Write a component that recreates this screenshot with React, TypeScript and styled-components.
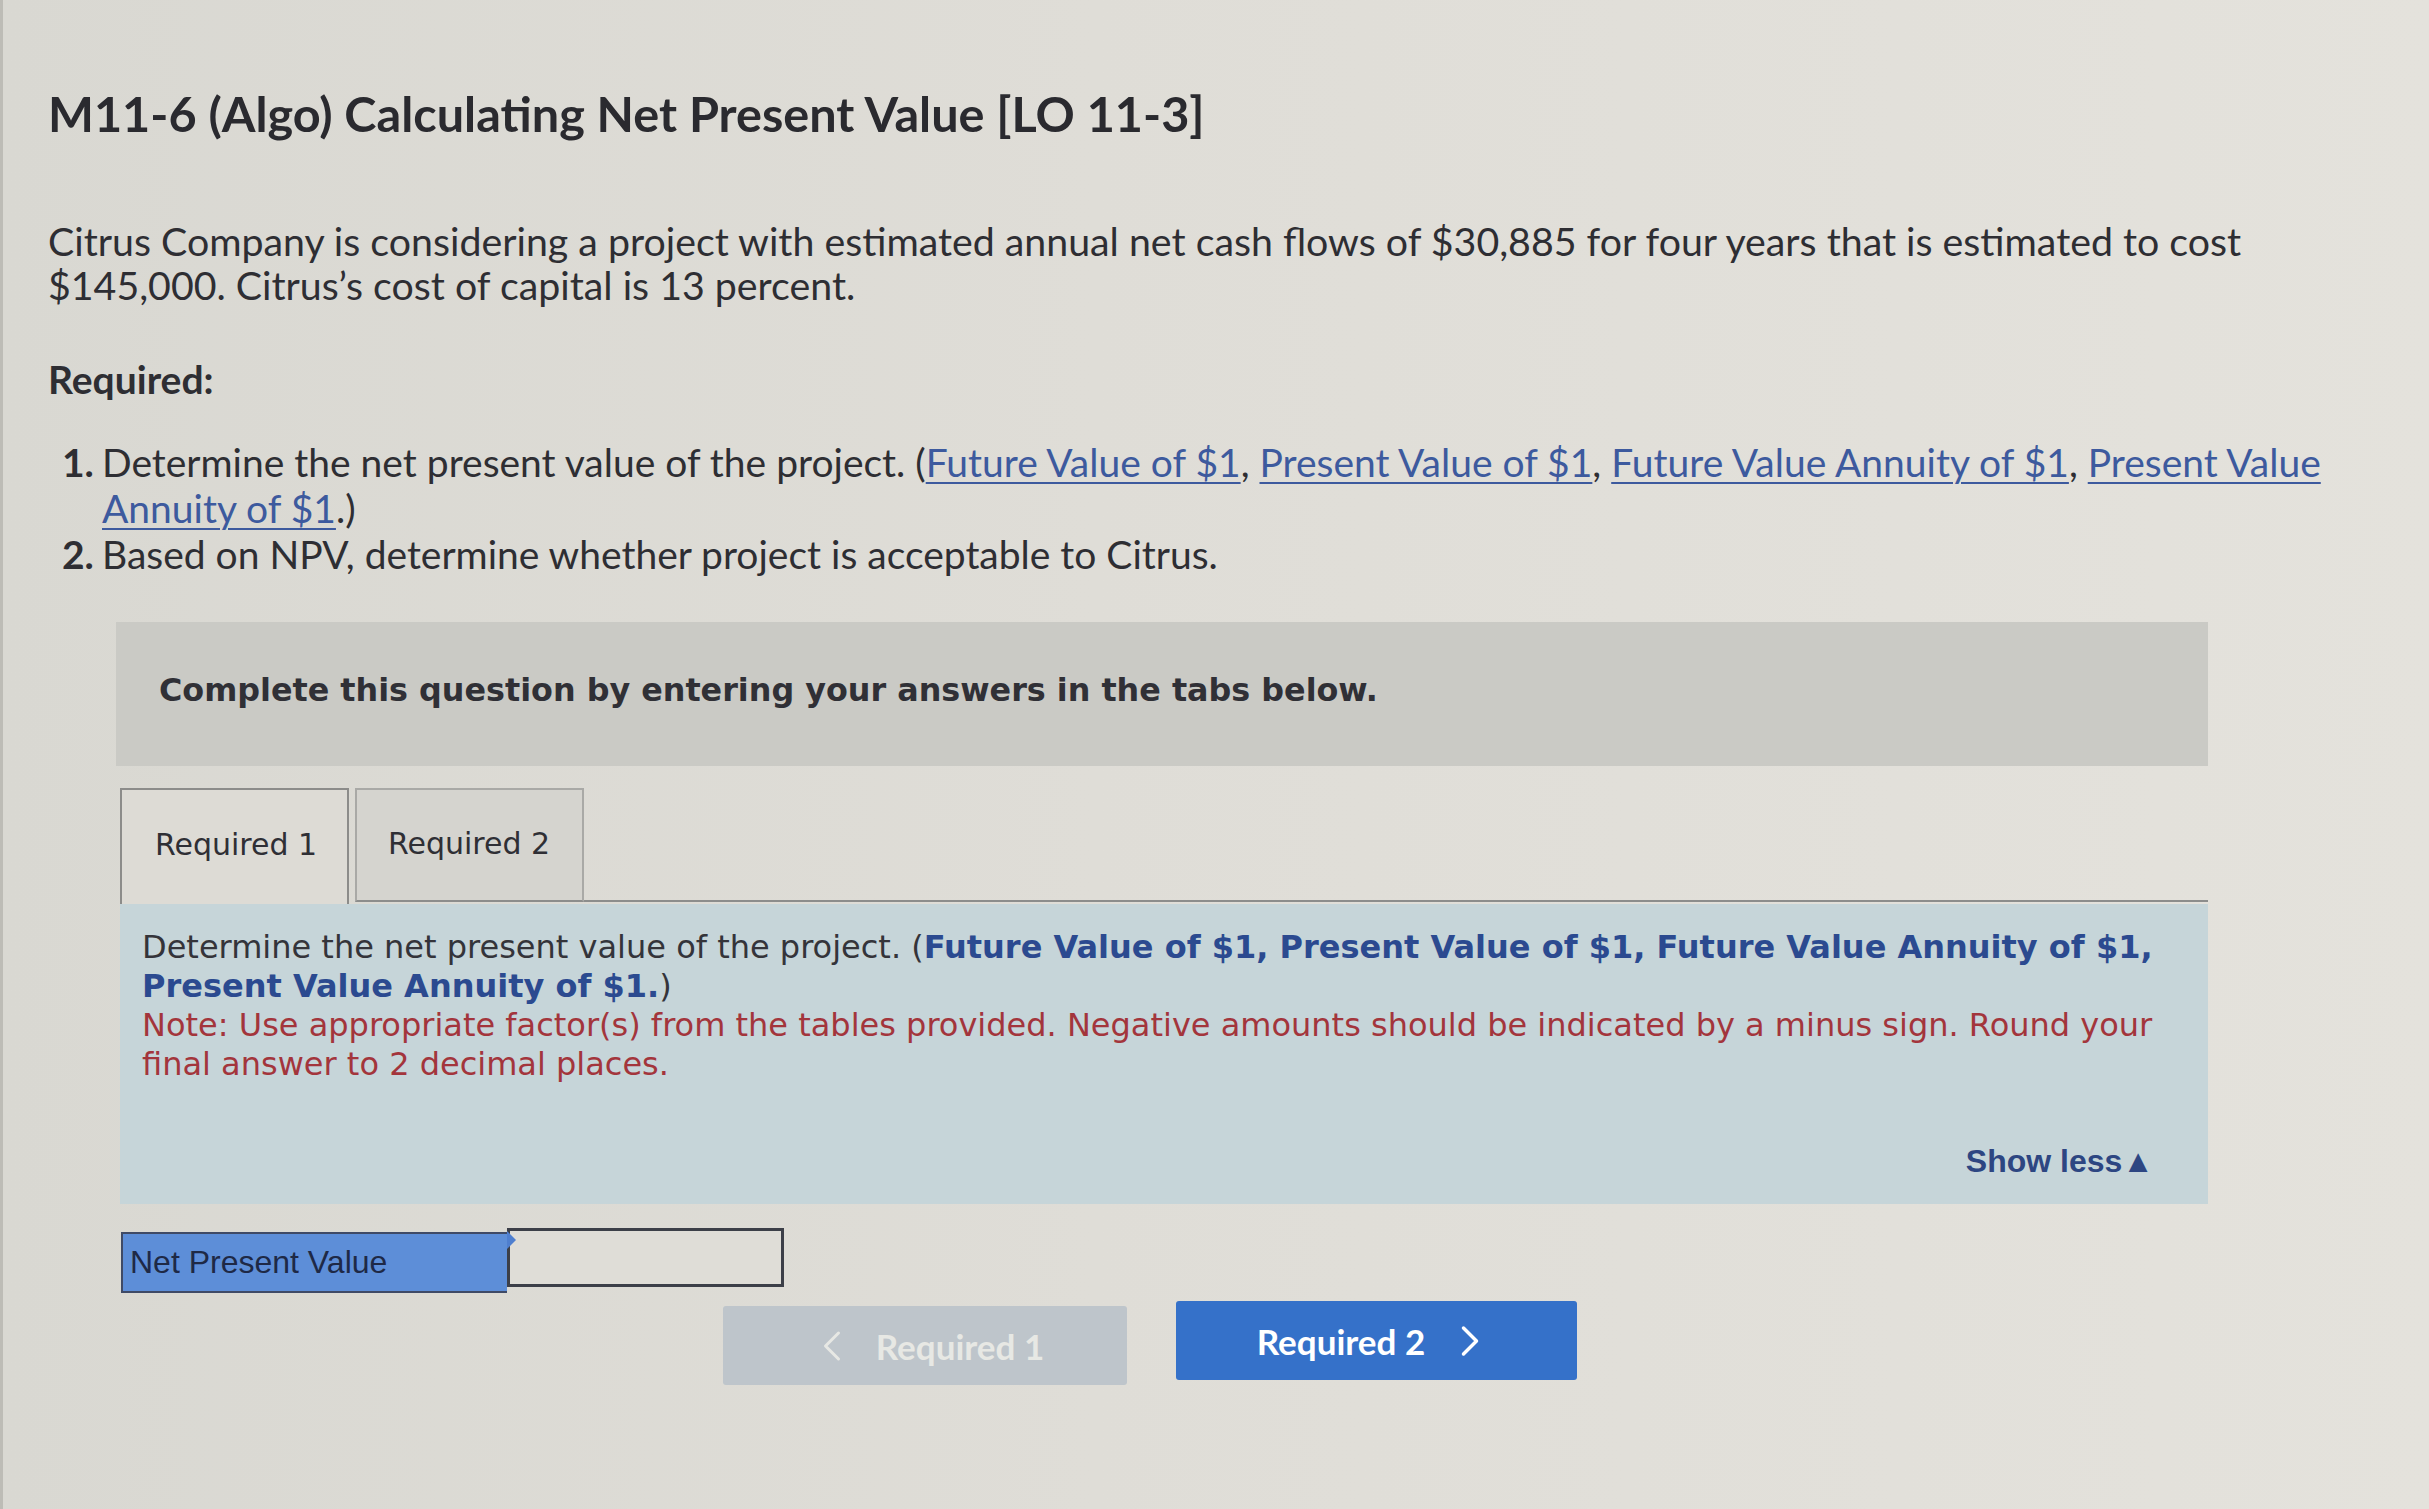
import React from "react";
import styled, { createGlobalStyle } from "styled-components";
import { ChevronLeft, ChevronRight } from "lucide-react";

const Global = createGlobalStyle`
  html, body { margin: 0; padding: 0; background: #dcdbd5; }
  body { font-family: Lato, "Open Sans", sans-serif; }
`;

const Page = styled.div`
  width: 2429px;
  min-height: 1509px;
  box-sizing: border-box;
  padding: 85px 0 0 45px;
  border-left: 3px solid #bdbcb6;
  background: linear-gradient(90deg, #d9d8d2 0%, #dfddd7 45%, #e4e2dc 100%);
  color: #2c2c31;
`;

const Title = styled.h1`
  margin: 0;
  font-size: 48.6px;
  line-height: 56px;
  font-weight: 700;
  color: #2a2a2f;
  white-space: nowrap;
`;

const Para = styled.p`
  margin: 78px 0 0;
  font-size: 39.3px;
  line-height: 44px;
  white-space: nowrap;
  color: #2e2e33;
`;

const Required = styled.h2`
  margin: 50px 0 0;
  font-size: 39px;
  line-height: 44px;
  font-weight: 700;
  color: #2e2e33;
`;

const List = styled.ol`
  margin: 38px 0 0;
  padding: 0;
  list-style: none;
`;

const Item = styled.li`
  display: flex;
  font-size: 39px;
  line-height: 46px;
  white-space: nowrap;
  color: #2e2e33;
`;

const Num = styled.span`
  width: 40px;
  margin-left: 14px;
  font-weight: 700;
  flex: none;
`;

const Link = styled.a`
  color: #3d5a9e;
  text-decoration: underline;
  text-decoration-thickness: 2px;
  text-underline-offset: 5px;
`;

const Section = styled.div`
  margin: 45px 0 0 68px;
  width: 2092px;
`;

const Banner = styled.div`
  background: #cacac5;
  padding: 50px 0 58px 43px;
  font-family: "DejaVu Sans", Verdana, sans-serif;
  font-weight: 700;
  font-size: 31.8px;
  line-height: 36px;
  color: #303036;
`;

const TabRow = styled.div`
  margin-top: 22px;
  display: flex;
  align-items: flex-end;
  gap: 6px;
  padding-left: 4px;
  &::after {
    content: "";
    flex: 1;
    align-self: flex-end;
    height: 2px;
    background: #8c8d8c;
    margin-bottom: 2px;
    margin-left: -6px;
  }
`;

const Tab = styled.div<{ $active?: boolean }>`
  box-sizing: border-box;
  width: 229px;
  height: ${(p) => (p.$active ? "116px" : "114px")};
  display: flex;
  align-items: center;
  padding-left: ${(p) => (p.$active ? "33px" : "31px")};
  padding-bottom: ${(p) => (p.$active ? "6px" : "3px")};
  margin-bottom: ${(p) => (p.$active ? "0" : "2px")};
  font-family: "DejaVu Sans", Verdana, sans-serif;
  font-size: 30px;
  color: #2f2f35;
  background: ${(p) => (p.$active ? "#dddbd5" : "#d5d4cf")};
  border: 2px solid ${(p) => (p.$active ? "#8c8c8a" : "#a9a9a6")};
  border-bottom: ${(p) => (p.$active ? "none" : "2px solid #8c8d8c")};
`;

const Panel = styled.div`
  background: #c6d5d9;
  padding: 24px 54px 23px 22px;
  margin-left: 4px;
  font-family: "DejaVu Sans", Verdana, sans-serif;
  font-size: 32px;
  line-height: 39px;
  color: #34343a;
`;

const Line = styled.div`
  white-space: nowrap;
`;

const Strong = styled.b`
  color: #2b4a90;
`;

const Note = styled.div`
  color: #a3353c;
  white-space: nowrap;
`;

const ShowLess = styled.div`
  margin-top: 57px;
  text-align: right;
  font-family: "Liberation Sans", Arial, sans-serif;
  font-weight: 700;
  font-size: 32px;
  line-height: 40px;
  color: #2d4682;
`;

const AnswerRow = styled.div`
  margin: 24px 0 0 5px;
  display: flex;
  align-items: flex-start;
`;

const AnswerLabel = styled.div`
  box-sizing: border-box;
  width: 386px;
  height: 61px;
  margin-top: 4px;
  display: flex;
  align-items: center;
  padding-left: 7px;
  background: #5d8ed8;
  border: 2px solid #3f4a66;
  border-right: none;
  font-family: "Liberation Sans", Arial, sans-serif;
  font-size: 32px;
  color: #1e2946;
`;

const InputWrap = styled.div`
  position: relative;
`;

const Input = styled.input`
  box-sizing: border-box;
  width: 277px;
  height: 59px;
  border: 3px solid #3c3f48;
  background: #dfddd7;
  outline: none;
  font-size: 28px;
  display: block;
`;

const Marker = styled.span`
  position: absolute;
  left: 0;
  top: 3px;
  width: 0;
  height: 0;
  border-top: 9px solid transparent;
  border-bottom: 9px solid transparent;
  border-left: 9px solid #4f7fcf;
`;

const NavRow = styled.div`
  margin-top: 8px;
  display: flex;
  justify-content: center;
  gap: 49px;
  padding-right: 24px;
`;

const NavButton = styled.button<{ $primary?: boolean }>`
  box-sizing: border-box;
  width: ${(p) => (p.$primary ? "401px" : "404px")};
  height: 79px;
  margin-top: ${(p) => (p.$primary ? "0" : "5px")};
  border: none;
  border-radius: 3px;
  display: flex;
  align-items: center;
  justify-content: center;
  gap: ${(p) => (p.$primary ? "19px" : "18px")};
  font-family: Lato, "Open Sans", sans-serif;
  font-weight: 700;
  font-size: 35px;
  color: ${(p) => (p.$primary ? "#ffffff" : "#e7e8e4")};
  background: ${(p) => (p.$primary ? "#3571c9" : "#bec5cb")};
  cursor: ${(p) => (p.$primary ? "pointer" : "default")};
  svg { flex: none; }
`;

export default function App() {
  return (
    <>
      <Global />
      <Page>
        <Title>M11-6 (Algo) Calculating Net Present Value [LO 11-3]</Title>
        <Para>
          Citrus Company is considering a project with estimated annual net cash flows of $30,885 for four years that is estimated to cost
          <br />
          $145,000. Citrus’s cost of capital is 13 percent.
        </Para>
        <Required>Required:</Required>
        <List>
          <Item>
            <Num>1.</Num>
            <span>
              Determine the net present value of the project. (<Link>Future Value of $1</Link>, <Link>Present Value of $1</Link>,{" "}
              <Link>Future Value Annuity of $1</Link>, <Link>Present Value</Link>
              <br />
              <Link>Annuity of $1</Link>.)
            </span>
          </Item>
          <Item>
            <Num>2.</Num>
            <span>Based on NPV, determine whether project is acceptable to Citrus.</span>
          </Item>
        </List>
        <Section>
          <Banner>Complete this question by entering your answers in the tabs below.</Banner>
          <TabRow>
            <Tab $active>Required 1</Tab>
            <Tab>Required 2</Tab>
          </TabRow>
          <Panel>
            <Line>
              Determine the net present value of the project. (
              <Strong>Future Value of $1, Present Value of $1, Future Value Annuity of $1,</Strong>
            </Line>
            <Line>
              <Strong>Present Value Annuity of $1.</Strong>)
            </Line>
            <Note>
              Note: Use appropriate factor(s) from the tables provided. Negative amounts should be indicated by a minus sign. Round your
            </Note>
            <Note>final answer to 2 decimal places.</Note>
            <ShowLess>Show less▲</ShowLess>
          </Panel>
          <AnswerRow>
            <AnswerLabel>Net Present Value</AnswerLabel>
            <InputWrap>
              <Input type="text" aria-label="Net Present Value" />
              <Marker />
            </InputWrap>
          </AnswerRow>
          <NavRow>
            <NavButton disabled>
              <ChevronLeft size={52} strokeWidth={1.4} />
              <span>Required 1</span>
            </NavButton>
            <NavButton $primary>
              <span>Required 2</span>
              <ChevronRight size={52} strokeWidth={1.6} />
            </NavButton>
          </NavRow>
        </Section>
      </Page>
    </>
  );
}
